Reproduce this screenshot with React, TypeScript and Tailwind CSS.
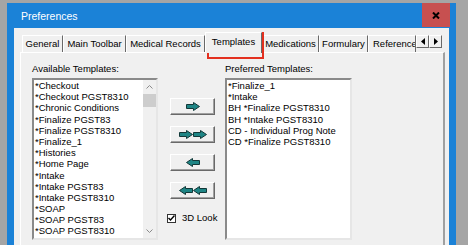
const available = [
  '*Checkout',
  '*Checkout PGST8310',
  '*Chronic Conditions',
  '*Finalize PGST83',
  '*Finalize PGST8310',
  '*Finalize_1',
  '*Histories',
  '*Home Page',
  '*Intake',
  '*Intake PGST83',
  '*Intake PGST8310',
  '*SOAP',
  '*SOAP PGST83',
  '*SOAP PGST8310',
  '*SOAP_1',
];

const preferred = [
  '*Finalize_1',
  '*Intake',
  'BH *Finalize PGST8310',
  'BH *Intake PGST8310',
  'CD - Individual Prog Note',
  'CD *Finalize PGST8310',
];

const font = { fontFamily: '"Liberation Sans", Arial, sans-serif' };

function Arrow({ left }: { left?: boolean }) {
  return (
    <svg width="14" height="9" viewBox="0 0 14 9" className={left ? '-scale-x-100' : ''}>
      <polygon
        points="0.5,2.5 7.5,2.5 7.5,0.5 13.5,4.5 7.5,8.5 7.5,6.5 0.5,6.5"
        fill="#1e8585"
        stroke="#123838"
        strokeWidth="1"
      />
    </svg>
  );
}

function MoveButton({ count, left }: { count: number; left?: boolean }) {
  return (
    <div className="w-[45px] h-[17px] flex items-center justify-center bg-[#f0f0f0] border border-t-white border-l-white border-r-[#696969] border-b-[#696969] shadow-[inset_-1px_-1px_0_#a0a0a0]">
      <Arrow left={left} />
      {count === 2 && <Arrow left={left} />}
    </div>
  );
}

function Tab({ label, w, selected, clip }: { label: string; w: number; selected?: boolean; clip?: boolean }) {
  if (selected) {
    return (
      <div
        className="relative z-10 h-[21px] -mb-px bg-[#f0f0f0] border-t border-l border-white border-r border-r-[#696969] flex items-start pt-[3px] justify-center text-[9.5px] leading-[12px]"
        style={{ width: w }}
      >
        {label}
      </div>
    );
  }
  return (
    <div
      className={
        'h-[17px] border-t border-l border-white border-r border-r-[#696969] flex items-center text-[9.5px] leading-[12px] whitespace-nowrap overflow-hidden ' +
        (clip ? 'justify-start pl-[4px]' : 'justify-center')
      }
      style={{ width: w }}
    >
      {label}
    </div>
  );
}

function Chevron({ down }: { down?: boolean }) {
  return (
    <svg width="7" height="4" viewBox="0 0 7 4">
      <polyline
        points={down ? '0.5,0.5 3.5,3.5 6.5,0.5' : '0.5,3.5 3.5,0.5 6.5,3.5'}
        fill="none"
        stroke="#8a8a8a"
        strokeWidth="1"
      />
    </svg>
  );
}

function ListBox({ items, width, scroll }: { items: string[]; width: number; scroll?: boolean }) {
  return (
    <div
      className="h-[162px] bg-white flex border-2 border-t-[#8a8a8a] border-l-[#8a8a8a] border-r-[#e6e6e6] border-b-[#e6e6e6] overflow-hidden"
      style={{ width }}
    >
      <div className="flex-1 pl-[1px] overflow-hidden">
        {items.map((t) => (
          <div key={t} className="h-[11.2px] leading-[11.2px] text-[9.5px] whitespace-nowrap">
            {t}
          </div>
        ))}
      </div>
      {scroll && (
        <div className="w-[13px] flex flex-col bg-[#f0f0f0]">
          <div className="h-[14px] flex items-center justify-center">
            <Chevron />
          </div>
          <div className="h-[13px] bg-[#cdcdcd]" />
          <div className="flex-1" />
          <div className="h-[14px] flex items-center justify-center">
            <Chevron down />
          </div>
        </div>
      )}
    </div>
  );
}

function ScrollTri({ right }: { right?: boolean }) {
  return (
    <div className="w-[13px] h-[13px] flex items-center justify-center bg-[#f0f0f0] border border-t-white border-l-white border-r-[#696969] border-b-[#696969]">
      <svg width="4" height="7" viewBox="0 0 4 7">
        <polygon points={right ? '0,0 4,3.5 0,7' : '4,0 0,3.5 4,7'} fill="#000" />
      </svg>
    </div>
  );
}

export default function App() {
  return (
    <div className="relative w-[468px] h-[245px] bg-[#a5a5a5] overflow-hidden pt-[3px] pl-[7px]" style={font}>
      <div className="w-[449px] h-[260px] bg-[#1b82d7] flex flex-col">
        <div className="h-[25px] flex items-stretch pr-[6px] shrink-0">
          <div className="flex-1 pl-[14px] pt-[6px] text-white text-[10.5px] leading-[14px]">Preferences</div>
          <div className="w-[28px] h-[24px] bg-[#c75050] flex items-center justify-center">
            <svg width="8" height="7" viewBox="0 0 8 7">
              <path d="M1 0.5 L7 6.5 M7 0.5 L1 6.5" stroke="#000" strokeWidth="2" />
            </svg>
          </div>
        </div>
        <div className="flex-1 mx-[7px] bg-[#f0f0f0] flex flex-col text-black">
          <div className="mt-[4px] h-[20px] pl-[8px] flex items-end">
            <Tab label="General" w={41} />
            <Tab label="Main Toolbar" w={63} />
            <Tab label="Medical Records" w={79} />
            <Tab label="Templates" w={57} selected />
            <Tab label="Medications" w={57} />
            <Tab label="Formulary" w={49} />
            <Tab label="Reference" w={48} clip />
            <div className="flex mb-[4px]">
              <ScrollTri />
              <ScrollTri right />
            </div>
          </div>
          <div className="flex-1 ml-[6px] mr-[4px] border-t border-l border-t-white border-l-white border-r-2 border-r-[#a0a0a0] pt-[10px] pl-[11px] flex">
            <div className="w-[126px] flex flex-col">
              <div className="h-[12px] leading-[12px] text-[9.5px] mb-[3px]">Available Templates:</div>
              <ListBox items={available} width={126} scroll />
            </div>
            <div className="w-[67px] pt-[35px] flex flex-col">
              <div className="ml-[12px] flex flex-col gap-[11px]">
                <MoveButton count={1} />
                <MoveButton count={2} />
                <MoveButton count={1} left />
                <MoveButton count={2} left />
              </div>
              <div className="ml-[9px] mt-[13px] flex items-center gap-[6px]">
                <div className="w-[9px] h-[9px] bg-white border border-[#333] flex items-center justify-center">
                  <svg width="7" height="6" viewBox="0 0 7 6">
                    <polyline points="0.5,3 2.5,5 6.5,0.5" fill="none" stroke="#000" strokeWidth="1.4" />
                  </svg>
                </div>
                <span className="text-[9.5px] leading-[12px]">3D Look</span>
              </div>
            </div>
            <div className="w-[127px] flex flex-col">
              <div className="h-[12px] leading-[12px] text-[9.5px] mb-[3px]">Preferred Templates:</div>
              <ListBox items={preferred} width={127} />
            </div>
          </div>
        </div>
      </div>
      <div className="absolute left-[207px] top-[32px] w-[57px] h-[27px] border-2 border-[#e3301f]" />
    </div>
  );
}
